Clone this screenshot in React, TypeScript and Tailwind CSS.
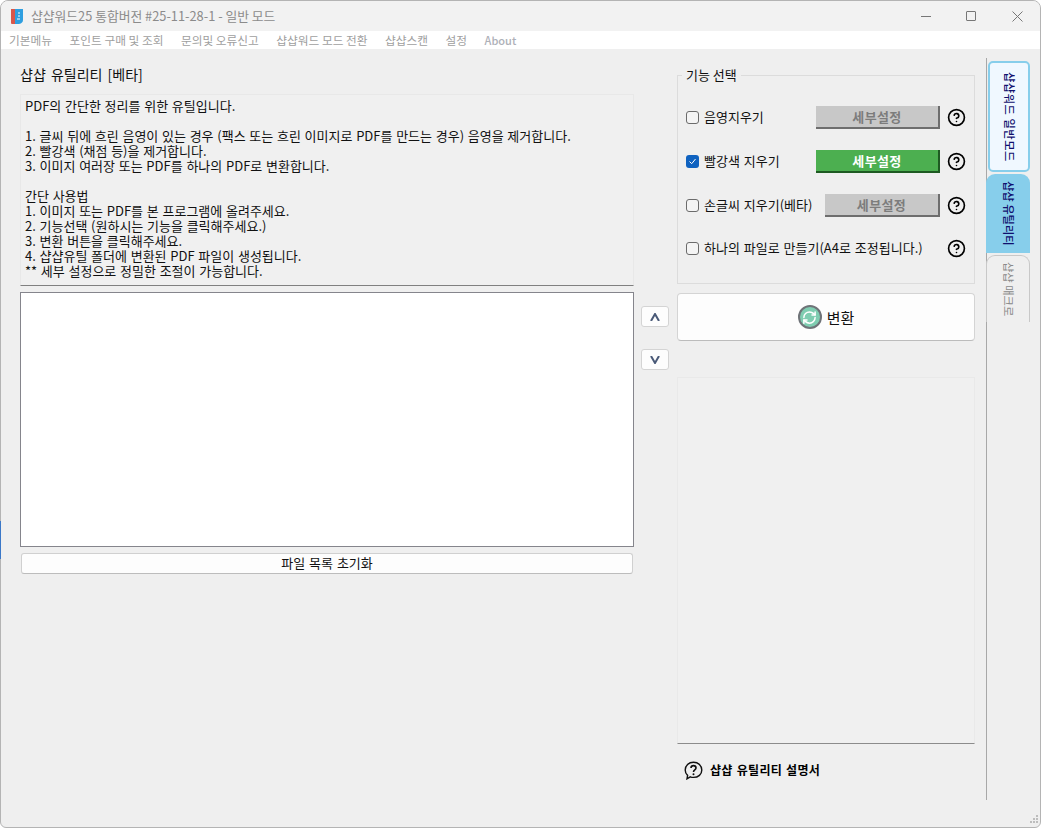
import React from "react";
import { CircleHelp, RefreshCw } from "lucide-react";

const font = { fontFamily: '"Noto Sans CJK KR","Noto Sans",sans-serif' };

const menus = ["기본메뉴", "포인트 구매 및 조회", "문의및 오류신고", "샵샵워드 모드 전환", "샵샵스캔", "설정"];

const desc = [
  "PDF의 간단한 정리를 위한 유틸입니다.",
  "",
  "1. 글씨 뒤에 흐린 음영이 있는 경우 (팩스 또는 흐린 이미지로 PDF를 만드는 경우) 음영을 제거합니다.",
  "2. 빨강색 (채점 등)을 제거합니다.",
  "3. 이미지 여러장 또는 PDF를 하나의 PDF로 변환합니다.",
  "",
  "간단 사용법",
  "1. 이미지 또는 PDF를 본 프로그램에 올려주세요.",
  "2. 기능선택 (원하시는 기능을 클릭해주세요.)",
  "3. 변환 버튼을 클릭해주세요.",
  "4. 샵샵유틸 폴더에 변환된 PDF 파일이 생성됩니다.",
  "** 세부 설정으로 정밀한 조절이 가능합니다.",
].join("\n");

function Check({ on }: { on?: boolean }) {
  return on ? (
    <span className="flex h-[13px] w-[13px] shrink-0 items-center justify-center rounded-[3px] bg-[#0f62c0]">
      <svg width="9" height="9" viewBox="0 0 9 9" fill="none" stroke="#ffffff" strokeWidth="1">
        <path d="M1.5 4.5 L3.7 6.7 L7.5 2" />
      </svg>
    </span>
  ) : (
    <span className="h-[13px] w-[13px] shrink-0 rounded-[3px] border border-[#6b6b6b] bg-[#f4f4f4]" />
  );
}

function Detail({ on, w }: { on?: boolean; w: string }) {
  return (
    <div
      className={
        w +
        " ml-auto flex h-[23px] items-center justify-center border-r-2 border-b-2 text-[13px] font-bold tracking-[0.4px] " +
        (on
          ? "border-[#1e5a22] bg-[#4caf50] text-white"
          : "border-[#6e6e6e] bg-[#c8c8c8] text-[#7c7c7c]")
      }
    >
      세부설정
    </div>
  );
}

function Row({ label, on, w, mt }: { label: string; on?: boolean; w?: string; mt: string }) {
  return (
    <div className={mt + " flex h-[23px] items-center pl-[8px] pr-[8px]"}>
      <Check on={on} />
      <span className="mb-[2px] ml-[5px] whitespace-nowrap text-[13px] leading-[15px] text-[#111] [word-spacing:1px]">{label}</span>
      {w ? <Detail on={on} w={w} /> : <span className="ml-auto" />}
      <CircleHelp size={19} strokeWidth={2.1} className="ml-[7px] text-black" />
    </div>
  );
}

function Tab({ cls, text, extra }: { cls: string; text: string; extra?: string }) {
  return (
    <div className={cls + " flex items-center justify-center"}>
      <span className={"whitespace-nowrap text-[11.25px] leading-none [writing-mode:vertical-rl] [text-orientation:sideways] " + (extra ?? "")}>
        {text}
      </span>
    </div>
  );
}

function Small({ d, mt }: { d: string; mt: string }) {
  return (
    <div className={mt + " flex h-[21px] w-[28px] items-center justify-center rounded-[3px] border border-[#d4d4d4] bg-[#fdfdfd]"}>
      <svg width="10" height="8" viewBox="0 0 10 8" fill="none" stroke="#4a5a78" strokeWidth="2">
        <path d={d} />
      </svg>
    </div>
  );
}

export default function App() {
  return (
    <div
      style={font}
      className="relative flex h-[828px] w-[1041px] flex-col rounded-t-[8px] rounded-b-[6px] border border-[#b4b4b4] bg-[#efefef] text-black"
    >
      <div className="flex h-[30px] shrink-0 items-center rounded-t-[7px] bg-[#f2f2f2] pl-[9px]">
        <svg width="14" height="17" viewBox="0 0 14 17">
          <path d="M1 1 H5 V16 H2 Q1 16 1 15 Z" fill="#d9574a" />
          <path d="M5 1 H13 V12 Q13 15 9 16 H5 Z" fill="#2f9fe0" />
          <path d="M8 5 h2 M8 8 h2 M7 11 h3" stroke="#ffffff" strokeWidth="1" />
        </svg>
        <span className="ml-[7px] text-[12.8px] leading-none text-[#8b8b8b]">샵샵워드25 통합버전 #25-11-28-1 - 일반 모드</span>
        <div className="ml-auto flex items-center pr-[17px]">
          <span className="mr-[35px] h-px w-[10px] bg-[#777]" />
          <span className="mr-[36px] h-[10px] w-[10px] rounded-[1px] border border-[#777]" />
          <svg width="11" height="11" viewBox="0 0 11 11" stroke="#777" strokeWidth="1">
            <path d="M0.5 0.5 L10.5 10.5 M10.5 0.5 L0.5 10.5" />
          </svg>
        </div>
      </div>

      <div className="flex h-[18px] shrink-0 items-center gap-[17.5px] bg-white pl-[8px] text-[11.7px] leading-none text-[#a0a0a0]">
        {menus.map((m) => (
          <span key={m} className="whitespace-nowrap">{m}</span>
        ))}
        <span className="text-[11px] font-medium text-[#aeb0b8]">About</span>
      </div>

      <div className="flex flex-1 items-start pl-[19px]">
        <div className="w-[614px] pt-[17px]">
          <div className="h-[16px] whitespace-nowrap text-[14px] leading-[16px] text-[#111] [word-spacing:2px]">샵샵 유틸리티 [베타]</div>
          <div className="mt-[12px] h-[192px] whitespace-pre border-t border-l border-r border-b-[1.5px] border-t-[#e8e8e8] border-r-[#e8e8e8] border-l-[#e8e8e8] border-b-[#808080] bg-[#f0f0f0] pl-[4px] pt-[3px] text-[13px] leading-[15px] text-[#111] [word-spacing:0.8px]">
            {desc}
          </div>
          <div className="mt-[6px] h-[255px] border border-[#85858c] bg-white" />
          <div className="mx-px mt-[6px] flex h-[21px] items-center justify-center rounded-[3px] border border-[#d0d0d0] border-b-[#bcbcbc] bg-[#fdfdfd] pb-[2px] text-[13px] leading-none text-[#111] [word-spacing:1px]">
            파일 목록 초기화
          </div>
        </div>

        <div className="ml-[7px] flex w-[28px] flex-col">
          <Small mt="mt-[257px]" d="M1 8 L5 1 L9 8" />
          <Small mt="mt-[22px]" d="M1 0 L5 7 L9 0" />
        </div>

        <div className="ml-[8px] w-[298px]">
          <div className="relative mt-[26px] h-[209px] border border-[#dcdcdc] pt-[30px]">
            <span className="absolute -top-[9px] left-[4px] bg-[#efefef] px-[4px] text-[13px] leading-[16px] text-[#111]">기능 선택</span>
            <Row label="음영지우기" w="w-[124px]" mt="mt-0" />
            <Row label="빨강색 지우기" on w="w-[124px]" mt="mt-[21px]" />
            <Row label="손글씨 지우기(베타)" w="w-[115px]" mt="mt-[21px]" />
            <Row label="하나의 파일로 만들기(A4로 조정됩니다.)" mt="mt-[20px]" />
          </div>
          <div className="mt-[9px] flex h-[48px] items-center justify-center rounded-[4px] border border-[#d4d4d4] border-b-[#bcbcbc] bg-[#fdfdfd]">
            <span className="flex h-[24px] w-[24px] items-center justify-center rounded-full border-2 border-[#6f7378] bg-[#7fcdb1]">
              <RefreshCw size={15} strokeWidth={2.4} className="text-white" />
            </span>
            <span className="ml-[5px] text-[15px] leading-none text-[#111]">변환</span>
          </div>
          <div className="mt-[36px] h-[367px] border border-[#e9e9e9] border-b-[#8c8c8c] bg-[#f0f0f0]" />
          <div className="mt-[17px] flex items-center pl-[7px]">
            <svg width="19" height="19" viewBox="0 0 19 19" fill="none">
              <path
                d="M9.5 1.2 C14.3 1.2 17.8 4.6 17.8 9 C17.8 13.4 14.3 16.4 9.5 16.4 C8.3 16.4 7.3 16.2 6.3 15.8 L3 17.8 L3.6 14.4 C2 13 1.2 11.2 1.2 9 C1.2 4.6 4.7 1.2 9.5 1.2 Z"
                stroke="#111"
                strokeWidth="1.4"
              />
              <path d="M7 7 C7 3.8 12 3.8 12 7 C12 9 9.5 8.8 9.5 11" stroke="#111" strokeWidth="1.6" />
              <circle cx="9.5" cy="13.2" r="1" fill="#111" />
            </svg>
            <span className="mb-[2px] ml-[7px] whitespace-nowrap text-[12px] font-bold leading-none tracking-[0.3px] text-black [word-spacing:1px]">샵샵 유틸리티 설명서</span>
          </div>
        </div>

        <div className="ml-[11px] mt-[9px] h-[742px] w-[43px] border-l border-[#a8a8a8]">
          <div className="mt-[3px] flex flex-col">
            <Tab cls="ml-px h-[111px] w-[42px] rounded-[5px] border-2 border-[#87ceeb] bg-[#f0f8ff] font-medium text-[#10106e]" text="샵샵워드 일반모드" extra="tracking-[0.5px]" />
            <Tab cls="-ml-px mt-[2px] h-[79px] w-[44px] rounded-t-[9px] bg-[#87ceeb] font-medium text-[#10106e]" text="샵샵 유틸리티" />
            <Tab cls="-ml-px mt-[2px] h-[67px] w-[44px] rounded-t-[9px] border border-b-0 border-[#c8c8c8] bg-[#efefef] text-[#8a8a8a]" text="샵샵 매크로" />
          </div>
        </div>
      </div>

      <span className="absolute -left-px top-[520px] h-[38px] w-px bg-[#3b78c8]" />
      <svg className="absolute bottom-[1px] right-[1px]" width="11" height="11" viewBox="0 0 11 11" fill="#bdbdbd">
        <rect x="8" y="0" width="2" height="2" />
        <rect x="5" y="3" width="2" height="2" />
        <rect x="8" y="3" width="2" height="2" />
        <rect x="2" y="6" width="2" height="2" />
        <rect x="5" y="6" width="2" height="2" />
        <rect x="8" y="6" width="2" height="2" />
      </svg>
    </div>
  );
}
